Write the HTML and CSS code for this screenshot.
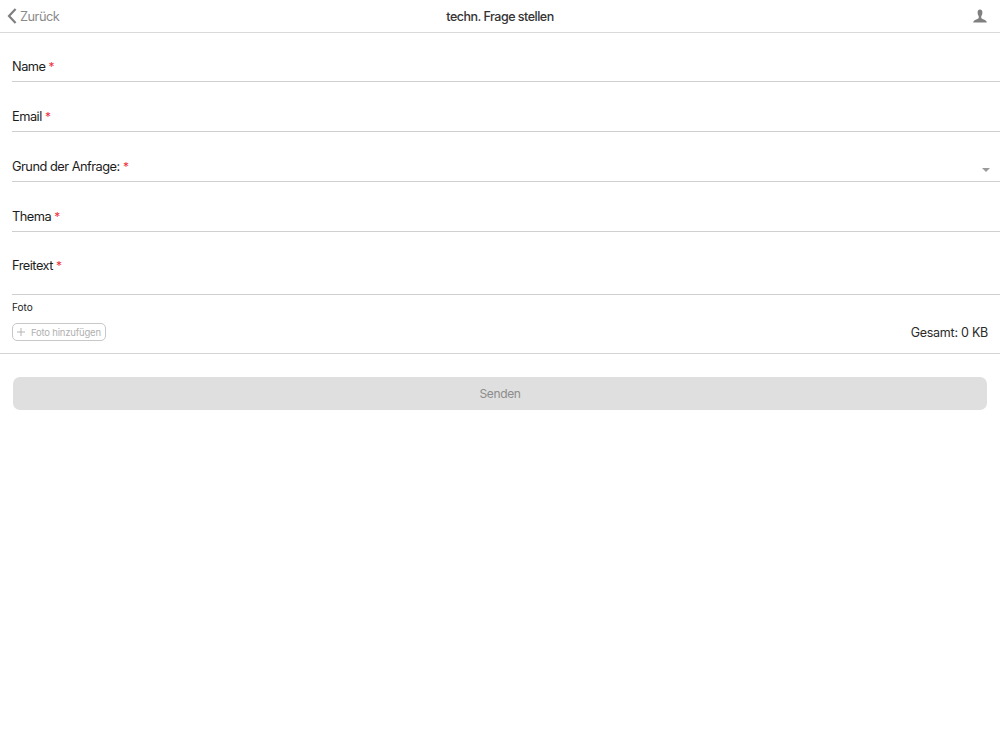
FILE: index.html
```html
<!DOCTYPE html>
<html lang="de">
<head>
<meta charset="utf-8">
<title>techn. Frage stellen</title>
<link rel="stylesheet" href="styles.css">
</head>
<body>
<header class="topbar">
  <a class="back">
    <svg class="back-icon" width="10" height="16" viewBox="0 0 10 16"><path d="M8.6 1 2 8l6.600 7" fill="none" stroke="#808080" stroke-width="2.200"/></svg>
    <span>Zurück</span>
  </a>
  <h1 class="title">techn. Frage stellen</h1>
  <svg class="user-icon" width="14" height="14" viewBox="0 0 14 14"><path d="M7 .5C5.400 .5 4.600 1.600 4.600 3.300c0 1.600.5 3 1 3.800.3.6.3 1.600-.1 2.100C4.700 10.200 1.500 10.800.6 12.200.3 12.700.2 13.200.2 13.600h13.600c0-.4-.1-.9-.4-1.400C12.500 10.800 9.300 10.200 8.500 9.200c-.4-.5-.4-1.500-.1-2.100.5-.8 1-2.200 1-3.800C9.400 1.600 8.600.5 7 .5z" fill="#808080"/></svg>
</header>
<main>
  <div class="field field-first"><span class="label">Name <i class="req">*</i></span></div>
  <div class="field"><span class="label">Email <i class="req">*</i></span></div>
  <div class="field field-select"><span class="label">Grund der Anfrage: <i class="req">*</i></span><span class="caret"></span></div>
  <div class="field"><span class="label">Thema <i class="req">*</i></span></div>
  <div class="field field-tall"><span class="label">Freitext <i class="req">*</i></span></div>
  <section class="photo">
    <div class="photo-title">Foto</div>
    <div class="photo-row">
      <button class="add" type="button">
        <svg width="8" height="8" viewBox="0 0 8 8"><path d="M4 0v8M0 4h8" stroke="#b5b5b5" stroke-width="1" fill="none"/></svg>
        <span>Foto hinzufügen</span>
      </button>
      <span class="total">Gesamt: 0 KB</span>
    </div>
  </section>
  <div class="actions"><button class="send" type="button">Senden</button></div>
</main>
</body>
</html>
```
FILE: styles.css
```css
* { box-sizing: border-box; }
html, body { margin: 0; height: 100%; }
body {
  background: #fff;
  color: #1c1c1c;
  font-family: Inter, "Liberation Sans", sans-serif;
  font-size: 13px;
  overflow: hidden;
}
.topbar {
  height: 33px;
  border-bottom: 1px solid #d9d9d9;
  display: flex;
  align-items: center;
  justify-content: space-between;
  padding: 0 13px 0 7px;
  position: relative;
}
.back {
  display: flex;
  align-items: center;
  gap: 3px;
  color: #8a8a8a;
  font-size: 12.800px;
  letter-spacing: -0.5px;
}
.title {
  position: absolute;
  left: 0;
  right: 0;
  margin: 0;
  text-align: center;
  font-size: 12.500px;
  font-weight: 500;
  letter-spacing: -0.5px;
  color: #333;
  pointer-events: none;
}
.field {
  height: 50px;
  margin-left: 12px;
  border-bottom: 1px solid #cfcfcf;
  display: flex;
  align-items: flex-end;
  justify-content: space-between;
  padding-bottom: 6px;
}
.field-first { height: 49px; }
.field-tall { height: 63px; align-items: flex-start; padding-top: 26px; }
.label { font-size: 12.800px; letter-spacing: -0.5px; line-height: 16px; }
.req { color: #f0303a; font-style: normal; font-size: 12px; }
.caret {
  width: 0;
  height: 0;
  margin: 0 10px 3px 0;
  border-left: 4px solid transparent;
  border-right: 4px solid transparent;
  border-top: 4px solid #9a9a9a;
}
.photo {
  height: 59px;
  border-bottom: 1px solid #d4d4d4;
  padding: 6px 12px 0;
}
.photo-title { font-size: 10px; line-height: 12px; color: #222; }
.photo-row {
  display: flex;
  align-items: center;
  justify-content: space-between;
  margin-top: 10px;
}
.add {
  width: 94px;
  height: 18px;
  padding: 0 0 0 4px;
  display: flex;
  align-items: center;
  gap: 6px;
  background: #fff;
  border: 1px solid #c8c8c8;
  border-radius: 5px;
  color: #b0b0b0;
  font: 9.500px Inter, "Liberation Sans", sans-serif;
  letter-spacing: -0.2px;
}
.total { font-size: 12.500px; letter-spacing: -0.25px; color: #2a2a2a; }
.actions { padding: 23px 13px 0; }
.send {
  display: block;
  width: 100%;
  height: 33px;
  background: #dfdfdf;
  border: 0;
  border-radius: 7px;
  color: #8c8c8c;
  font: 12px Inter, "Liberation Sans", sans-serif;
  letter-spacing: -0.35px;
}
```
